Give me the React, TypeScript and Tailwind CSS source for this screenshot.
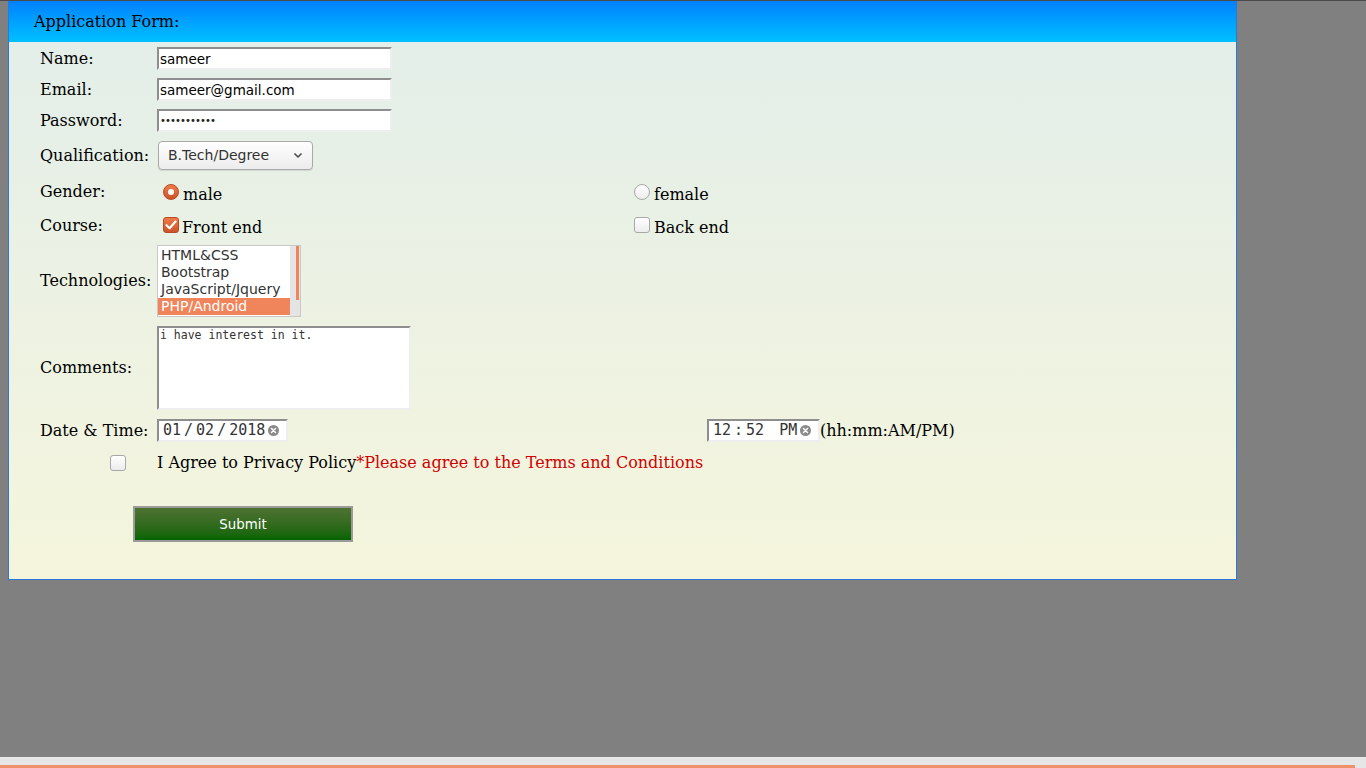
import React from "react";

const serif = "font-['DejaVu_Serif','Liberation_Serif',serif]";
const sans = "font-['DejaVu_Sans','Liberation_Sans',sans-serif]";
const mono = "font-['DejaVu_Sans_Mono','Liberation_Mono',monospace]";

const inset =
  "border-2 border-t-[#8e8e8e] border-l-[#8e8e8e] border-r-[#eeeeee] border-b-[#eeeeee] bg-white";

const ClearIcon = () => (
  <svg width="11" height="11" viewBox="0 0 11 11" className="shrink-0">
    <circle cx="5.5" cy="5.5" r="5.5" fill="#8a8a8a" />
    <path d="M3.5 3.5 L7.5 7.5 M7.5 3.5 L3.5 7.5" stroke="#fff" strokeWidth="1.5" strokeLinecap="round" />
  </svg>
);

const Radio = ({ checked }: { checked?: boolean }) =>
  checked ? (
    <span className="w-[16px] h-[16px] rounded-full bg-gradient-to-b from-[#f27a48] to-[#c9542a] border border-[#b64a24] flex items-center justify-center shrink-0">
      <span className="block w-[6px] h-[6px] rounded-full bg-white" />
    </span>
  ) : (
    <span className="block w-[16px] h-[16px] rounded-full bg-gradient-to-b from-white to-[#ececec] border border-[#a8a8a8] shrink-0" />
  );

const Check = ({ checked }: { checked?: boolean }) =>
  checked ? (
    <span className="w-[16px] h-[16px] rounded-[3px] bg-gradient-to-b from-[#f27a48] to-[#c9542a] border border-[#b64a24] flex items-center justify-center shrink-0">
      <svg width="12" height="10" viewBox="0 0 12 10">
        <path d="M1.5 5.2 L4.6 8.2 L10.5 1.6" fill="none" stroke="#fff" strokeWidth="2.2" strokeLinecap="round" strokeLinejoin="round" />
      </svg>
    </span>
  ) : (
    <span className="block w-[16px] h-[16px] rounded-[3px] bg-gradient-to-b from-white to-[#ececec] border border-[#a8a8a8] shrink-0" />
  );

const Row = ({ label, h, children }: { label: string; h: string; children: React.ReactNode }) => (
  <div className={`flex items-center ${h}`}>
    <div className="w-[117px] shrink-0 text-[16px] text-black">{label}</div>
    {children}
  </div>
);

const techs = ["HTML&CSS", "Bootstrap", "JavaScript/Jquery", "PHP/Android"];

export default function App() {
  return (
    <div className={`h-screen flex flex-col bg-[#808080] ${serif} overflow-hidden`}>
      <div className="h-[1px] bg-[#4a4a4a]" />

      <main className="flex-1">
        <div className="ml-[8px] w-[1229px] border-x border-b border-[#2a78d8] bg-gradient-to-b from-[#e2eeea] to-[#f5f5dc]">
          <div className="h-[41px] bg-gradient-to-b from-[#0080ff] to-[#00c0ff] flex items-center pl-[25px] text-[16px] text-black">
            Application Form:
          </div>

          <div className="pl-[31px] pt-[1px] pb-[37px]">
            <Row label="Name:" h="h-[31px]">
              <div className={`${inset} w-[235px] h-[23px] flex items-center pl-[1px] pt-[1px] ${sans} text-[13.5px] text-black`}>sameer</div>
            </Row>
            <Row label="Email:" h="h-[31px]">
              <div className={`${inset} w-[235px] h-[23px] flex items-center pl-[1px] pt-[1px] ${sans} text-[13.5px] text-black`}>
                sameer@gmail.com
              </div>
            </Row>
            <Row label="Password:" h="h-[31px]">
              <div className={`${inset} w-[235px] h-[23px] flex items-center pl-[1px] ${sans} text-[10px] tracking-[-0.9px] text-[#222]`}>
                •••••••••••
              </div>
            </Row>
            <Row label="Qualification:" h="h-[39px]">
              <div
                className={`ml-[1px] w-[155px] h-[29px] rounded-[4px] border border-[#a9a9a9] bg-gradient-to-b from-white to-[#ececec] shadow-[0_1px_1px_rgba(0,0,0,0.1)] flex items-center justify-between pl-[9px] pr-[9px] ${sans} text-[14px] text-[#333]`}
              >
                <span>B.Tech/Degree</span>
                <svg width="10" height="7" viewBox="0 0 10 7">
                  <path d="M1.5 1.5 L5 5 L8.5 1.5" fill="none" stroke="#444" strokeWidth="1.5" />
                </svg>
              </div>
            </Row>
            <Row label="Gender:" h="h-[34px]">
              <div className="w-[471px] flex items-center">
                <span className="ml-[6px]"><Radio checked /></span>
                <span className="ml-[4px] pt-[6px] text-[16px]">male</span>
              </div>
              <div className="flex items-center">
                <span className="ml-[6px]"><Radio /></span>
                <span className="ml-[4px] pt-[6px] text-[16px]">female</span>
              </div>
            </Row>
            <Row label="Course:" h="h-[33px]">
              <div className="w-[471px] flex items-center pb-[2px]">
                <span className="ml-[6px]"><Check checked /></span>
                <span className="ml-[3px] pt-[6px] text-[16px]">Front end</span>
              </div>
              <div className="flex items-center pb-[2px]">
                <span className="ml-[6px]"><Check /></span>
                <span className="ml-[4px] pt-[6px] text-[16px]">Back end</span>
              </div>
            </Row>
            <Row label="Technologies:" h="h-[78px]">
              <div className="w-[144px] h-[72px] border border-[#c8c8c8] bg-white flex">
                <div className={`flex-1 pt-[1px] ${sans} text-[14px] leading-[17px]`}>
                  {techs.map((t, i) => (
                    <div key={t} className={`h-[17px] pl-[3px] ${i === 3 ? "bg-[#f0845a] text-white" : "text-[#333]"}`}>
                      {t}
                    </div>
                  ))}
                </div>
                <div className="w-[10px] bg-[#e4e4e4] flex justify-end pr-[1px]">
                  <div className="w-[3px] h-[54px] bg-[#f0845a]" />
                </div>
              </div>
            </Row>
            <Row label="Comments:" h="h-[96px]">
              <div className={`${inset} w-[254px] h-[84px] pl-[1px] ${mono} text-[11.5px] leading-[14px] text-[#333]`}>
                i have interest in it.
              </div>
            </Row>
            <Row label="Date & Time:" h="h-[29px]">
              <div className="w-[550px]">
                <div className={`${inset} w-[131px] h-[23px] flex items-center pl-[4px] gap-[3px] ${mono} text-[15px] text-[#333]`}>
                  <span>01</span>
                  <span>/</span>
                  <span>02</span>
                  <span>/</span>
                  <span>2018</span>
                  <ClearIcon />
                </div>
              </div>
              <div className={`${inset} w-[113px] h-[23px] flex items-center pl-[4px] gap-[3px] ${mono} text-[15px] text-[#333]`}>
                <span>12</span>
                <span>:</span>
                <span>52</span>
                <span className="ml-[12px]">PM</span>
                <ClearIcon />
              </div>
              <span className="text-[16px]">(hh:mm:AM/PM)</span>
            </Row>
            <div className="flex items-center h-[36px]">
              <span className="ml-[70px]"><Check /></span>
              <span className="ml-[31px] text-[16px] text-black">I Agree to Privacy Policy</span>
              <span className="text-[16px] text-[#d10000]">*Please agree to the Terms and Conditions</span>
            </div>
            <button
              className={`mt-[25px] ml-[93px] w-[220px] h-[36px] pt-[1px] border-2 border-[#9a9a9a] bg-gradient-to-b from-[#4e7132] to-[#006400] text-white ${sans} text-[13.33px]`}
            >
              Submit
            </button>
          </div>
        </div>
      </main>

      <div className="h-[11px] bg-[#e6e6e6] flex flex-col justify-end">
        <div className="h-[3px] w-[1355px] bg-[#f0916a]" />
      </div>
    </div>
  );
}
